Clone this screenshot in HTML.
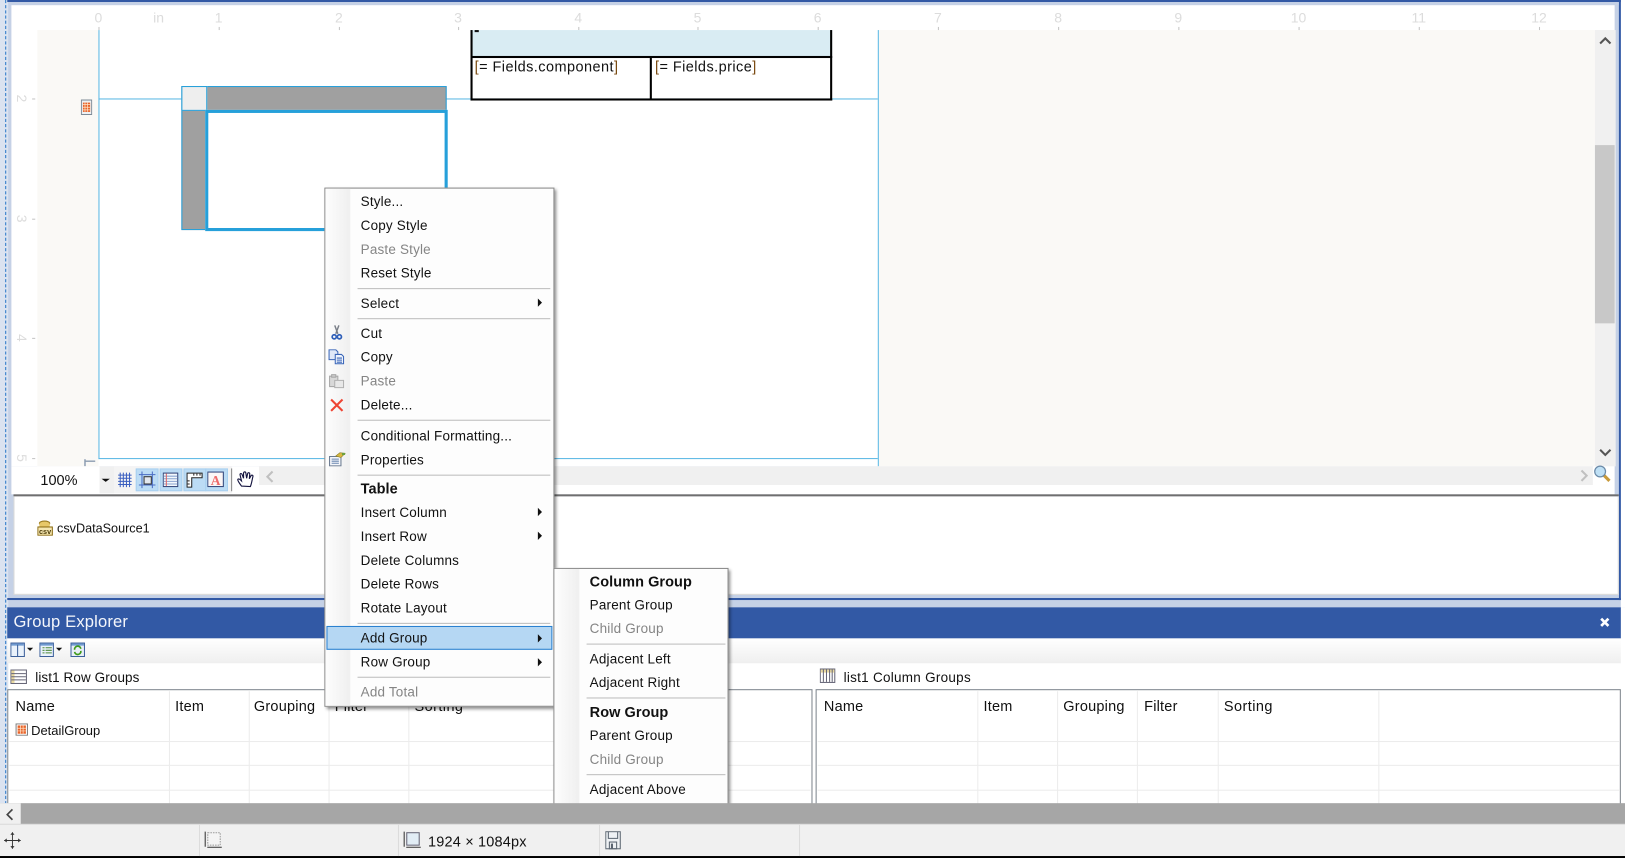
<!DOCTYPE html>
<html><head><meta charset="utf-8"><title>Designer</title>
<style>
html,body{margin:0;padding:0;width:1625px;height:858px;overflow:hidden;background:#fff}
#r{position:absolute;left:0;top:0;width:1568px;height:828px;transform:scale(1.03635);transform-origin:0 0;overflow:hidden;background:#fff;font-family:"Liberation Sans",sans-serif;color:#111}
#r div,#r svg{position:absolute}
.t{position:absolute;white-space:nowrap;transform:translateY(calc(-50% + 1px));font-size:13px;line-height:16px;letter-spacing:.18px}
.x{font-size:14px;letter-spacing:.2px;transform:translateY(-50%)}
.d{color:#858585}
.b{font-weight:bold;font-size:14px;letter-spacing:.05px;transform:translateY(-50%)}
.n{position:absolute;white-space:nowrap;transform:translate(-50%,-50%);font-size:13.5px;color:#dcdcdc}
.k{width:1px;height:3px;top:26px;background:#c4c4c4}
.l{width:3px;height:1px;left:31px;background:#c4c4c4}
.s{height:1px;background:#bdbdbd}
.a{width:0;height:0;border-left:4px solid #111;border-top:4px solid transparent;border-bottom:4px solid transparent}
.v{width:1px;background:#ececec}
.h{height:1px;background:#ececec}
.tb{width:22px;height:22px;top:452px;background:#bcdcf5;border:1px solid #a8d0f0;box-sizing:border-box}
</style></head><body><div id="r">

<!-- outer frame -->
<div style="left:0;top:0;width:1568px;height:586px;background:#c5d1e6"></div>
<div style="left:0;top:586px;width:7px;height:190px;background:#dde5f2"></div>
<div style="left:1564px;top:586px;width:4px;height:190px;background:#fff"></div>
<div style="left:1564px;top:0;width:4px;height:586px;background:#fff"></div>
<div style="left:0;top:0;width:8px;height:776px;background:#dbe3f0"></div>
<div style="left:5px;top:0;width:0;height:776px;border-left:1px dashed #2b78c8"></div>
<div style="left:7px;top:0;width:1557px;height:2px;background:#3259a5"></div>
<div style="left:7px;top:577px;width:1557px;height:2px;background:#3259a5"></div>
<div style="left:1562px;top:0;width:2px;height:579px;background:#3259a5"></div>
<div style="left:8px;top:2px;width:1554px;height:3px;background:#c5d1e6"></div>
<div style="left:8px;top:574px;width:1554px;height:3px;background:#c5d1e6"></div>
<div style="left:8px;top:2px;width:3px;height:575px;background:#c5d1e6"></div>
<div style="left:1558px;top:2px;width:4px;height:575px;background:#c5d1e6"></div>

<!-- ruler + canvas background -->
<div style="left:11px;top:5px;width:1547px;height:445px;background:#fff"></div>
<div style="left:36px;top:29px;width:59px;height:421px;background:#faf9f6"></div>
<div style="left:848px;top:29px;width:691px;height:421px;background:#faf9f6"></div>
<div style="left:95px;top:29px;width:1px;height:414px;background:#5ab8e4"></div>
<div style="left:847px;top:29px;width:1px;height:421px;background:#5ab8e4"></div>
<div style="left:95px;top:95px;width:752px;height:1px;background:#5ab8e4"></div>
<div style="left:95px;top:442px;width:752px;height:1px;background:#5ab8e4"></div>

<span class="n" style="left:95px;top:17px">0</span>
<span class="n" style="left:153px;top:17px">in</span>
<span class="n" style="left:211px;top:17px">1</span>
<span class="n" style="left:327px;top:17px">2</span>
<span class="n" style="left:442px;top:17px">3</span>
<span class="n" style="left:558px;top:17px">4</span>
<span class="n" style="left:673px;top:17px">5</span>
<span class="n" style="left:789px;top:17px">6</span>
<span class="n" style="left:905px;top:17px">7</span>
<span class="n" style="left:1021px;top:17px">8</span>
<span class="n" style="left:1137px;top:17px">9</span>
<span class="n" style="left:1253px;top:17px">10</span>
<span class="n" style="left:1369px;top:17px">11</span>
<span class="n" style="left:1485px;top:17px">12</span>
<div class="k" style="left:95px"></div><div class="k" style="left:211px"></div><div class="k" style="left:327px"></div><div class="k" style="left:442px"></div><div class="k" style="left:558px"></div><div class="k" style="left:673px"></div><div class="k" style="left:789px"></div><div class="k" style="left:905px"></div><div class="k" style="left:1021px"></div><div class="k" style="left:1137px"></div><div class="k" style="left:1253px"></div><div class="k" style="left:1369px"></div><div class="k" style="left:1485px"></div>
<span class="n" style="left:21px;top:95px;transform:translate(-50%,-50%) rotate(90deg)">2</span>
<span class="n" style="left:21px;top:211px;transform:translate(-50%,-50%) rotate(90deg)">3</span>
<span class="n" style="left:21px;top:326px;transform:translate(-50%,-50%) rotate(90deg)">4</span>
<span class="n" style="left:21px;top:442px;transform:translate(-50%,-50%) rotate(90deg)">5</span>
<div class="l" style="top:95px"></div><div class="l" style="top:211px"></div><div class="l" style="top:326px"></div><div class="l" style="top:442px"></div>

<!-- vertical scrollbar -->
<div style="left:1539px;top:29px;width:20px;height:421px;background:#f0f0f0"></div>
<div style="left:1539px;top:140px;width:19px;height:172px;background:#c8c8c8"></div>
<svg style="left:1542px;top:34px" width="14" height="10"><path d="M2 8L7 3L12 8" fill="none" stroke="#555" stroke-width="2"/></svg>
<svg style="left:1542px;top:432px" width="14" height="10"><path d="M2 2L7 7L12 2" fill="none" stroke="#555" stroke-width="2"/></svg>

<!-- table -->
<div style="left:454px;top:29px;width:349px;height:26px;background:#d9ecf3"></div>
<div style="left:454px;top:29px;width:2px;height:68px;background:#000"></div>
<div style="left:801px;top:29px;width:2px;height:68px;background:#000"></div>
<div style="left:454px;top:54px;width:349px;height:2px;background:#000"></div>
<div style="left:454px;top:95px;width:349px;height:2px;background:#000"></div>
<div style="left:627px;top:55px;width:2px;height:41px;background:#000"></div>
<div style="left:458px;top:29px;width:4px;height:2px;background:#111"></div>
<span class="t x" style="left:458px;top:64px;letter-spacing:.42px"><span style="color:#7a4a10">[</span>= Fields.component<span style="color:#7a4a10">]</span></span>
<span class="t x" style="left:632px;top:64px;letter-spacing:.42px"><span style="color:#7a4a10">[</span>= Fields.price<span style="color:#7a4a10">]</span></span>

<!-- selected list -->
<div style="left:175px;top:83px;width:256px;height:139px;background:#a0a0a0;box-sizing:border-box;border:1px solid #26a0da"></div>
<div style="left:175px;top:83px;width:25px;height:24px;background:#eeeeee;box-sizing:border-box;border:1px solid #26a0da"></div>
<div style="left:198px;top:106px;width:234px;height:117px;background:#fff;box-sizing:border-box;border:3px solid #26a0da"></div>
<svg style="left:78px;top:96px" width="11" height="15"><rect x=".5" y=".5" width="10" height="14" fill="#eef1f3" stroke="#7d8a96"/><rect x="2" y="3" width="7" height="9" fill="#e8632a"/><path d="M2 5H9M2 7.5H9M2 10H9M4 3V12M6.5 3V12" stroke="#fde3c8" stroke-width=".7"/></svg>
<svg style="left:80px;top:443px" width="12" height="7"><path d="M2 0V7M2 2H12" stroke="#8a9bb0" stroke-width="1.4" fill="none"/></svg>

<!-- toolbar -->
<div style="left:11px;top:450px;width:1547px;height:27px;background:#fff"></div>
<div style="left:36px;top:450px;width:60px;height:26px;background:#fff"></div>
<div style="left:96px;top:450px;width:14px;height:26px;background:#f0f0f0"></div>
<div style="left:98px;top:462px;border-left:4px solid transparent;border-right:4px solid transparent;border-top:3px solid #111"></div>
<span class="t x" style="left:39px;top:463px;letter-spacing:0">100%</span>
<div style="left:110px;top:450px;width:114px;height:26px;background:#f4f4f4"></div>
<svg style="left:113px;top:455px" width="15" height="16"><path d="M1 3.5H14M1 6.5H14M1 9.5H14M1 12.5H14M3 1V15M6 1V15M9 1V15M12 1V15" stroke="#3b5fc0" stroke-width="1"/></svg>
<div class="tb" style="left:131px"></div>
<svg style="left:133px;top:454px" width="18" height="18"><path d="M4 1V17M14 1V17M1 4H17M1 14H17" stroke="#4a6cc4" stroke-width="1"/><rect x="6" y="6" width="7" height="7" fill="#e4e8ee" stroke="#333"/></svg>
<div class="tb" style="left:154px"></div>
<svg style="left:157px;top:455px" width="16" height="16"><rect x=".5" y="1.5" width="14" height="13" fill="#f4f8fc" stroke="#33467a"/><path d="M1 4.5H14M1 7H14M1 9.5H14M1 12H14" stroke="#8aa4d0"/><path d="M3.5 2V14" stroke="#d66"/></svg>
<div class="tb" style="left:177px"></div>
<svg style="left:180px;top:455px" width="16" height="16"><path d="M.5 1.5H15V6H5V15H.5Z" fill="#fff" stroke="#222"/><path d="M7 2V4M10 2V4M13 2V4M1 9H3M1 12H3" stroke="#222"/></svg>
<div class="tb" style="left:198px"></div>
<svg style="left:200px;top:455px" width="17" height="16"><rect x=".5" y=".5" width="15" height="14" fill="#fbf6f6" stroke="#33467a"/><text x="8" y="13" text-anchor="middle" font-family="Liberation Serif,serif" font-weight="bold" font-size="13" fill="#ee6a6a">A</text></svg>
<div style="left:223px;top:452px;width:1px;height:22px;background:#888"></div>
<svg style="left:228px;top:454px" width="19" height="18" viewBox="0 0 19 18"><path d="M5 15C3 12 1 10 1.5 8.5C2.5 7.5 4 9 5 10L3.6 4C3.6 2.6 5.2 2.6 5.6 3.8L7 7.5L7 2.3C7.4 1 8.9 1 9.2 2.3L10 7.5L11 2.8C11.5 1.6 13 2 13 3.2L12.6 8L14.2 5C15 4 16.5 4.6 16 6C15.2 9 15 12 13.6 15.5Z" fill="#fff" stroke="#151540" stroke-width="1.1"/></svg>
<div style="left:250px;top:450px;width:1287px;height:18px;background:#f0f0f0"></div>
<svg style="left:256px;top:454px" width="10" height="12"><path d="M7 1L2 6L7 11" fill="none" stroke="#c0c0c0" stroke-width="2"/></svg>
<svg style="left:1524px;top:453px" width="10" height="12"><path d="M2 1L7 6L2 11" fill="none" stroke="#c0c0c0" stroke-width="2"/></svg>
<svg style="left:1537px;top:448px" width="18" height="18"><path d="M10 10L16 16" stroke="#c89a3a" stroke-width="3"/><circle cx="7" cy="7" r="5.2" fill="#bfe0f5" stroke="#6b8aa8" stroke-width="1.2"/></svg>

<!-- data tray -->
<div style="left:13px;top:477px;width:1549px;height:2px;background:#6f6f6f"></div>
<div style="left:13px;top:479px;width:1549px;height:95px;background:#fff;box-sizing:border-box;border:1px solid #d8d8d8;border-top:0"></div>
<svg style="left:36px;top:502px" width="16" height="15"><ellipse cx="7" cy="3" rx="5" ry="2.2" fill="#e8c868" stroke="#9a7a20"/><rect x="2" y="3" width="10" height="5" fill="#e8c868"/><rect x=".5" y="6.5" width="14" height="8" fill="#f5e6b0" stroke="#8a6a10"/><text x="7.5" y="13.5" text-anchor="middle" font-family="Liberation Sans,sans-serif" font-weight="bold" font-size="7" fill="#4a3a08">csv</text></svg>
<span class="t" style="left:55px;top:509px;font-size:12.2px;letter-spacing:0">csvDataSource1</span>

<!-- group explorer -->
<div style="left:7px;top:586px;width:1557px;height:30px;background:#3259a5"></div>
<span class="t" style="left:13px;top:600px;font-size:16px;color:#f4f6fb;letter-spacing:.15px">Group Explorer</span>
<svg style="left:1543px;top:595px" width="11" height="11"><path d="M2 2L9 9M9 2L2 9" stroke="#fff" stroke-width="2.6"/></svg>
<div style="left:7px;top:616px;width:1557px;height:24px;background:linear-gradient(#fff,#efefef)"></div>
<svg style="left:10px;top:620px" width="15" height="14"><rect x=".5" y=".5" width="13" height="13" fill="#eaf2fb" stroke="#3b5f9a"/><rect x="1" y="1" width="12" height="2" fill="#6f9ad0"/><path d="M7 2V13" stroke="#3b5f9a"/></svg>
<div style="left:26px;top:625px;border-left:3px solid transparent;border-right:3px solid transparent;border-top:3px solid #111"></div>
<svg style="left:38px;top:620px" width="15" height="14"><rect x=".5" y=".5" width="13" height="13" fill="#eaf2fb" stroke="#3b5f9a"/><rect x="1" y="1" width="12" height="2" fill="#6f9ad0"/><path d="M3 5H5M6 5H12M3 7.5H5M6 7.5H12M3 10H5M6 10H12" stroke="#4f8a3a"/></svg>
<div style="left:54px;top:625px;border-left:3px solid transparent;border-right:3px solid transparent;border-top:3px solid #111"></div>
<svg style="left:68px;top:620px" width="15" height="14"><rect x=".5" y=".5" width="13" height="13" fill="#e8eef6" stroke="#3b5f9a"/><rect x="1" y="1" width="12" height="2" fill="#6f9ad0"/><path d="M4 7A3 3 0 0 1 10 6M10 8A3 3 0 0 1 4 9" fill="none" stroke="#3e9a1a" stroke-width="1.6"/></svg>

<svg style="left:10px;top:646px" width="17" height="14"><rect x=".5" y=".5" width="15" height="13" fill="#fff" stroke="#667"/><rect x="1" y="1" width="3" height="12" fill="#e8d8a0"/><path d="M1 4H15M1 7H15M1 10H15" stroke="#667"/></svg>
<span class="t" style="left:34px;top:653px;letter-spacing:.1px">list1 Row Groups</span>
<svg style="left:791px;top:645px" width="16" height="14"><rect x=".5" y=".5" width="14" height="13" fill="#fff" stroke="#667"/><rect x="1" y="1" width="13" height="3" fill="#e8d8a0"/><path d="M3.5 1V13M6.5 1V13M9.5 1V13M12 1V13" stroke="#667"/></svg>
<span class="t" style="left:814px;top:653px;letter-spacing:.27px">list1 Column Groups</span>

<!-- grids -->
<div style="left:7px;top:665px;width:777px;height:120px;box-sizing:border-box;border:1px solid #7f868e;background:#fff"></div>
<div style="left:787px;top:665px;width:777px;height:120px;box-sizing:border-box;border:1px solid #7f868e;background:#fff"></div>
<div class="h" style="left:9px;top:715px;width:773px"></div>
<div class="h" style="left:9px;top:738px;width:773px"></div>
<div class="h" style="left:9px;top:762px;width:773px"></div>
<div class="h" style="left:789px;top:715px;width:774px"></div>
<div class="h" style="left:789px;top:738px;width:774px"></div>
<div class="h" style="left:789px;top:762px;width:774px"></div>
<div class="v" style="left:163px;top:667px;height:109px"></div>
<div class="v" style="left:240px;top:667px;height:109px"></div>
<div class="v" style="left:317px;top:667px;height:109px"></div>
<div class="v" style="left:394px;top:667px;height:109px"></div>
<div class="v" style="left:550px;top:667px;height:109px"></div>
<div class="v" style="left:943px;top:667px;height:109px"></div>
<div class="v" style="left:1020px;top:667px;height:109px"></div>
<div class="v" style="left:1097px;top:667px;height:109px"></div>
<div class="v" style="left:1175px;top:667px;height:109px"></div>
<div class="v" style="left:1330px;top:667px;height:109px"></div>
<span class="t x" style="left:15px;top:681px">Name</span>
<span class="t x" style="left:169px;top:681px">Item</span>
<span class="t x" style="left:245px;top:681px">Grouping</span>
<span class="t x" style="left:323px;top:681px">Filter</span>
<span class="t x" style="left:400px;top:681px;letter-spacing:.4px">Sorting</span>
<span class="t x" style="left:795px;top:681px">Name</span>
<span class="t x" style="left:949px;top:681px">Item</span>
<span class="t x" style="left:1026px;top:681px">Grouping</span>
<span class="t x" style="left:1104px;top:681px">Filter</span>
<span class="t x" style="left:1181px;top:681px;letter-spacing:.4px">Sorting</span>
<svg style="left:15px;top:698px" width="12" height="12"><rect x=".5" y=".5" width="11" height="11" fill="#fff" stroke="#7d7d7d"/><rect x="2" y="2" width="8" height="8" fill="#e8632a"/><path d="M4.7 2V10M7.3 2V10M2 4.7H10M2 7.3H10" stroke="#fde3c8" stroke-width=".7"/></svg>
<span class="t" style="left:30px;top:704px;font-size:12.5px;letter-spacing:0">DetailGroup</span>

<!-- context menu -->
<div style="left:313px;top:181px;width:222px;height:501px;background:#fdfdfd;box-sizing:border-box;border:1px solid #8a8a8a;box-shadow:2px 2px 3px rgba(0,0,0,.45)"></div>
<div style="left:314px;top:182px;width:24px;height:499px;background:linear-gradient(90deg,#fdfdfd,#efefef)"></div>
<span class="t" style="left:348px;top:194px">Style...</span>
<span class="t" style="left:348px;top:217px">Copy Style</span>
<span class="t d" style="left:348px;top:240px">Paste Style</span>
<span class="t" style="left:348px;top:263px">Reset Style</span>
<div class="s" style="left:345px;top:278px;width:186px"></div>
<span class="t" style="left:348px;top:292px">Select</span>
<div class="a" style="left:519px;top:288px"></div>
<div class="s" style="left:345px;top:307px;width:186px"></div>
<span class="t" style="left:348px;top:321px">Cut</span>
<span class="t" style="left:348px;top:344px">Copy</span>
<span class="t d" style="left:348px;top:367px">Paste</span>
<span class="t" style="left:348px;top:390px">Delete...</span>
<div class="s" style="left:345px;top:405px;width:186px"></div>
<span class="t" style="left:348px;top:420px">Conditional Formatting...</span>
<span class="t" style="left:348px;top:443px">Properties</span>
<div class="s" style="left:345px;top:458px;width:186px"></div>
<span class="t b" style="left:348px;top:471px">Table</span>
<span class="t" style="left:348px;top:494px">Insert Column</span>
<div class="a" style="left:519px;top:490px"></div>
<span class="t" style="left:348px;top:517px">Insert Row</span>
<div class="a" style="left:519px;top:513px"></div>
<span class="t" style="left:348px;top:540px">Delete Columns</span>
<span class="t" style="left:348px;top:563px">Delete Rows</span>
<span class="t" style="left:348px;top:586px">Rotate Layout</span>
<div class="s" style="left:345px;top:601px;width:186px"></div>
<div style="left:315px;top:604px;width:218px;height:23px;background:#b5d7f3;box-sizing:border-box;border:1px solid #2a80d0"></div>
<span class="t" style="left:348px;top:615px">Add Group</span>
<div class="a" style="left:519px;top:612px"></div>
<span class="t" style="left:348px;top:638px">Row Group</span>
<div class="a" style="left:519px;top:635px"></div>
<div class="s" style="left:345px;top:653px;width:186px"></div>
<span class="t d" style="left:348px;top:667px">Add Total</span>

<!-- menu icons -->
<svg style="left:317px;top:313px" width="16" height="16"><path d="M6 1L9 9M10 1L7 9" stroke="#7a7f88" stroke-width="1.4"/><circle cx="5.5" cy="12" r="2" fill="none" stroke="#2f5fb8" stroke-width="1.6"/><circle cx="10.5" cy="12" r="2" fill="none" stroke="#2f5fb8" stroke-width="1.6"/></svg>
<svg style="left:317px;top:337px" width="16" height="15"><path d="M.5 .5H7L9 2.5V10H.5Z" fill="#dfe8f8" stroke="#3a66b8"/><path d="M6.5 5H12.5L14.5 7V14H6.5Z" fill="#eef3fc" stroke="#3a66b8"/><path d="M8 8.5H13M8 10.5H13M8 12.5H13" stroke="#3a66b8"/></svg>
<svg style="left:317px;top:360px" width="16" height="15"><path d="M1 3H9V13H1Z" fill="#d8d8d8" stroke="#a8a8a8"/><path d="M3 1.5H7V4H3Z" fill="#c8c8c8" stroke="#a8a8a8"/><path d="M6 7H14.5V14H6Z" fill="#e8e8e8" stroke="#b0b0b0"/></svg>
<svg style="left:318px;top:384px" width="14" height="14"><path d="M1.5 1.5L12.5 12.5M12.5 1.5L1.5 12.5" stroke="#ee4433" stroke-width="2"/></svg>
<svg style="left:317px;top:436px" width="17" height="14"><path d="M1 4.5H12V13.5H1Z" fill="#f4f6fa" stroke="#6a7a90"/><path d="M3 7H10M3 9H10M3 11H10" stroke="#6a86b0"/><path d="M7 4L11 .8L16 1.5L12 5.5Z" fill="#d8b840" stroke="#8a7a20" stroke-width=".6"/><path d="M13 1H16V3H13Z" fill="#6aa040"/></svg>

<!-- submenu -->
<div style="left:534px;top:548px;width:169px;height:240px;background:#fdfdfd;box-sizing:border-box;border:1px solid #8a8a8a;box-shadow:2px 2px 3px rgba(0,0,0,.45)"></div>
<div style="left:535px;top:549px;width:24px;height:238px;background:linear-gradient(90deg,#fdfdfd,#efefef)"></div>
<span class="t b" style="left:569px;top:561px">Column Group</span>
<span class="t" style="left:569px;top:583px">Parent Group</span>
<span class="t d" style="left:569px;top:606px">Child Group</span>
<div class="s" style="left:566px;top:621px;width:134px"></div>
<span class="t" style="left:569px;top:635px">Adjacent Left</span>
<span class="t" style="left:569px;top:658px">Adjacent Right</span>
<div class="s" style="left:566px;top:673px;width:134px"></div>
<span class="t b" style="left:569px;top:687px">Row Group</span>
<span class="t" style="left:569px;top:709px">Parent Group</span>
<span class="t d" style="left:569px;top:732px">Child Group</span>
<div class="s" style="left:566px;top:747px;width:134px"></div>
<span class="t" style="left:569px;top:761px">Adjacent Above</span>

<!-- bottom scrollbar & status -->
<div style="left:0;top:775px;width:1568px;height:20px;background:#a6a6a6"></div>
<div style="left:0;top:775px;width:20px;height:20px;background:#f0f0f0"></div>
<svg style="left:5px;top:780px" width="10" height="12"><path d="M7 1L2 6L7 11" fill="none" stroke="#444" stroke-width="1.6"/></svg>
<div style="left:0;top:795px;width:1568px;height:1px;background:#dcdcdc"></div>
<div style="left:0;top:796px;width:1568px;height:30px;background:#f0f0f0"></div>
<div style="left:0;top:826px;width:1568px;height:2px;background:#000"></div>
<div style="left:192px;top:796px;width:1px;height:30px;background:#dcdcdc"></div>
<div style="left:384px;top:796px;width:1px;height:30px;background:#dcdcdc"></div>
<div style="left:578px;top:796px;width:1px;height:30px;background:#dcdcdc"></div>
<div style="left:771px;top:796px;width:1px;height:30px;background:#dcdcdc"></div>
<svg style="left:3px;top:802px" width="18" height="18"><path d="M9 1V17M1 9H17" stroke="#333" stroke-width=".9"/><path d="M9 1L7 3.5H11ZM9 17L7 14.5H11ZM1 9L3.5 7V11ZM17 9L14.5 7V11Z" fill="#333"/></svg>
<svg style="left:196px;top:802px" width="20" height="18"><rect x="4.5" y="1.5" width="12" height="12" fill="#f4f4f4" stroke="#9a9a9a" stroke-dasharray="1.5 1"/><path d="M2 0.5V15M4 15.5H18" stroke="#333"/></svg>
<svg style="left:388px;top:802px" width="20" height="18"><rect x="4.5" y="1.5" width="12" height="12" fill="#e2edf5" stroke="#667"/><path d="M2 0.5V15M4 15.5H18" stroke="#333"/></svg>
<span class="t x" style="left:413px;top:812px;letter-spacing:.17px">1924 × 1084px</span>
<svg style="left:584px;top:802px" width="16" height="19"><rect x=".5" y=".5" width="14" height="16.5" fill="#eef1f4" stroke="#5a6470"/><path d="M3 .5V7H12V.5" fill="none" stroke="#5a6470"/><rect x="4" y="10.5" width="7" height="6.5" fill="none" stroke="#5a6470"/><rect x="5.5" y="12" width="2" height="5" fill="#5a6470"/></svg>

</div></body></html>
